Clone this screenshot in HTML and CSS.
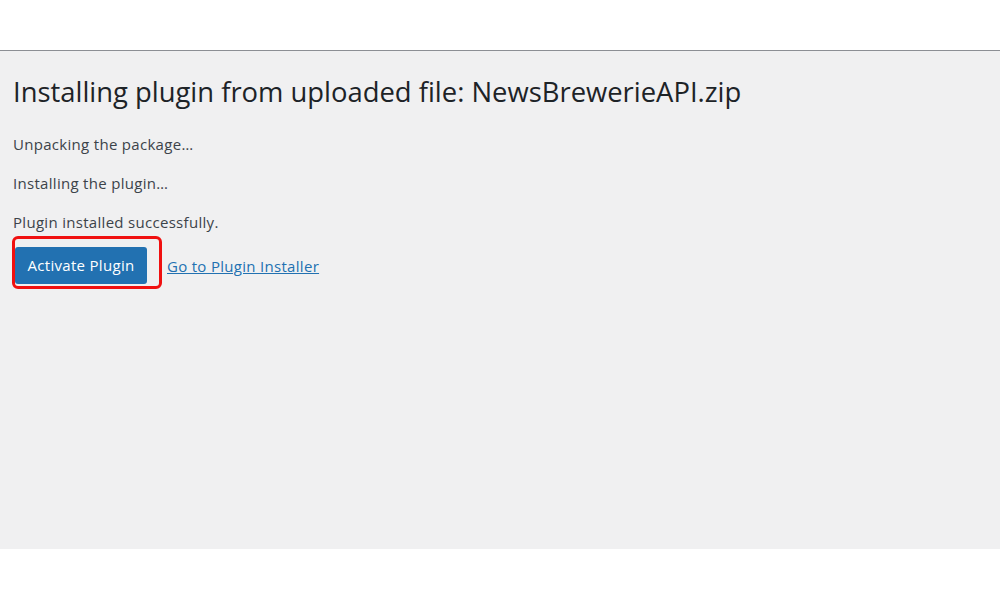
FILE: index.html
```html
<!DOCTYPE html>
<html>
<head>
<meta charset="utf-8">
<link rel="stylesheet" href="styles.css">
</head>
<body>
<div class="top"></div>
<main class="wrap">
  <h1 class="title">Installing plugin from uploaded file: NewsBrewerieAPI.zip</h1>
  <p class="msg">Unpacking the package…</p>
  <p class="msg">Installing the plugin…</p>
  <p class="msg">Plugin installed successfully.</p>
  <div class="actions">
    <span class="highlight"><a class="button" href="#">Activate Plugin</a></span>
    <a class="link" href="#">Go to Plugin Installer</a>
  </div>
</main>
</body>
</html>
```
FILE: styles.css
```css
html, body {
  margin: 0;
  padding: 0;
  background: #ffffff;
  font-family: "Open Sans", "Noto Sans", sans-serif;
}
.top {
  height: 50px;
  background: #ffffff;
  border-bottom: 1px solid #8c8f94;
}
.wrap {
  height: 498px;
  background: #f0f0f1;
  padding: 0 13px;
  box-sizing: border-box;
  overflow: hidden;
}
.title {
  margin: 0;
  padding-top: 24px;
  font-size: 27.4px;
  font-weight: 400;
  line-height: 34px;
  color: #1d2327;
}
.msg {
  margin: 0;
  font-size: 15px;
  letter-spacing: 0.3px;
  line-height: 20px;
  color: #3c434a;
  margin-top: 19px;
}
.title + .msg {
  margin-top: 25px;
}
.actions {
  display: flex;
  align-items: center;
  margin-top: 4px;
}
.highlight {
  display: inline-flex;
  border: 3px solid #f01010;
  border-radius: 6px;
  padding: 8px 12px 2px 0;
  margin-left: -1px;
}
.button {
  display: inline-block;
  background: #2271b1;
  color: #ffffff;
  text-decoration: none;
  font-size: 15px;
  letter-spacing: 0.3px;
  line-height: 37px;
  border-radius: 3px;
  width: 132px;
  text-align: center;
}
.link {
  margin-left: 5px;
  margin-top: 6px;
  font-size: 15px;
  letter-spacing: 0.3px;
  color: #2271b1;
  text-decoration: underline;
}
```
